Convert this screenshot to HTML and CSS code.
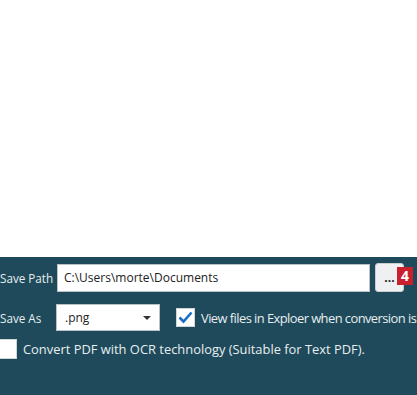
FILE: index.html
```html
<!DOCTYPE html>
<html>
<head>
<meta charset="utf-8">
<link rel="stylesheet" href="styles.css">
</head>
<body>
<div class="top"></div>
<div class="panel">
  <div class="row row-path">
    <span class="label">Save Path</span>
    <div class="input">C:\Users\morte\Documents</div>
    <div class="browse">
      <button class="btn">...</button>
      <span class="badge">4</span>
    </div>
  </div>
  <div class="row row-as">
    <span class="label">Save As</span>
    <div class="select"><span>.png</span><span class="arrow"></span></div>
    <span class="check checked">
      <svg width="15" height="13" viewBox="0 0 15 13"><path d="M1.5 6.5 L5.5 10.5 L13.5 1.5" fill="none" stroke="#1b6ec2" stroke-width="2.6"/></svg>
    </span>
    <span class="text text-view">View files in Exploer when conversion is</span>
  </div>
  <div class="row row-ocr">
    <span class="check"></span>
    <span class="text">Convert PDF with OCR technology (Suitable for Text PDF).</span>
  </div>
</div>
</body>
</html>
```
FILE: styles.css
```css
* { box-sizing: border-box; }
html, body { margin: 0; padding: 0; }
body {
  width: 417px;
  height: 395px;
  overflow: hidden;
  background: #ffffff;
  font-family: "Open Sans", "Noto Sans", sans-serif;
  font-size: 12px;
}
.top { height: 257px; background: #ffffff; }
.panel {
  height: 138px;
  background: #1e4a5b;
  padding-top: 6px;
  color: #e9eef0;
  white-space: nowrap;
  overflow: hidden;
}
.row { display: flex; align-items: center; }
.label { width: 57px; flex: none; font-size: 11.7px; }
.row-path { height: 29px; }
.input {
  width: 313px;
  height: 28px;
  background: #fff;
  border: 1px solid #b9c2c7;
  color: #222;
  padding-left: 6px;
  line-height: 26px;
  flex: none;
}
.browse { position: relative; margin-left: 5px; }
.btn {
  width: 29px;
  height: 29px;
  border: 1px solid #c9cdd0;
  border-radius: 3px;
  background: #eef0f1;
  color: #222;
  font-family: inherit;
  font-size: 12px;
  font-weight: bold;
  padding: 0;
  line-height: 20px;
  display: block;
}
.badge {
  position: absolute;
  left: 22px;
  top: 4px;
  width: 16px;
  height: 18px;
  background: #c8202f;
  color: #fff;
  font-weight: bold;
  font-size: 14px;
  line-height: 18px;
  text-align: center;
}
.row-as { margin-top: 12px; height: 27px; }
.row-as .label { width: 56px; }
.select {
  width: 104px;
  height: 27px;
  background: #fff;
  border: 1px solid #b9c2c7;
  color: #222;
  padding-left: 8px;
  padding-right: 8px;
  display: flex;
  align-items: center;
  justify-content: space-between;
  flex: none;
}
.arrow {
  width: 0; height: 0;
  border-left: 4px solid transparent;
  border-right: 4px solid transparent;
  border-top: 4px solid #333;
}
.check {
  width: 19px;
  height: 19px;
  background: #fff;
  border: 1px solid #cfd6da;
  flex: none;
  display: flex;
  align-items: center;
  justify-content: center;
}
.row-as .check { margin-left: 16px; margin-right: 6px; }
.row-ocr { margin-top: 8px; height: 20px; margin-left: -2px; }
.row-ocr .check { width: 19px; height: 20px; margin-right: 6px; }
.text { font-size: 12.9px; }
.text-view { letter-spacing: -0.55px; }
```
